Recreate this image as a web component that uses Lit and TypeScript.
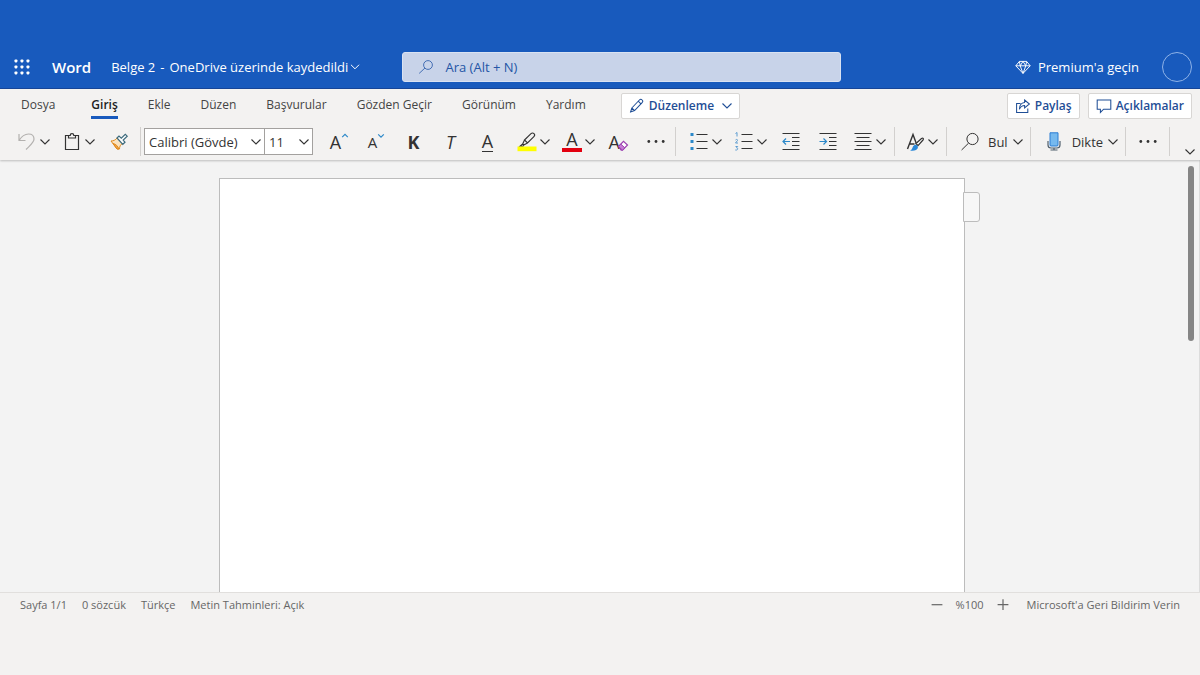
import { LitElement, html, css, svg } from "lit";
import { customElement, property, state } from "lit/decorators.js";

const glyphs: Record<string, unknown> = {
  waffle: svg`<g fill="#fff" stroke="none">${[2.5, 8.5, 14.5].map((y) =>
    [2.5, 8.5, 14.5].map((x) => svg`<rect x=${x} y=${y} width="2.900" height="2.900" rx=".8"/>`))}</g>`,
  chevron: svg`<path d="M5.500 7.500 10 12 14.500 7.500" stroke-width="1.100"/>`,
  search: svg`<circle cx="12.500" cy="7.500" r="5.500"/><path d="M8.700 11.300 1.500 18"/>`,
  find: svg`<circle cx="12.500" cy="7" r="5.600"/><path d="M8.600 11.100 1.600 18"/>`,
  gem: svg`<path d="M5.500 3h9l4.500 5.500-9 9.500L1 8.500ZM1 8.500h18M5.500 3l1 5.500L10 18l3.500-9.500 1-5.500M6.500 8.500 10 3l3.500 5.500" stroke-width="1.200"/>`,
  undo: svg`<path d="M2 2v6.500h6.500M2 8.500C4.500 4.500 8 2 11.500 2c3.500 0 5.500 2.200 5.500 5 0 3.500-3 5.500-8 10.500" stroke="#b3b1af" stroke-width="1.200"/>`,
  paste: svg`<path d="M6.500 3.500H3.500v14h13v-14h-3" stroke-width="1.200"/><path d="M6.500 6V3.500h1.700a1.800 1.800 0 0 1 3.600 0h1.700V6Z" stroke-width="1.200"/>`,
  painter: svg`<path d="M2 9c2.500 0 4.500-1 6-3l5.500 5.500c-2 1-3 3-3 5.500L8 17 2 9Z" fill="#fbe3bf" stroke="#e08a1e"/><path d="M4 11.500c3 .5 5 3 6 5.500L8 17Z" fill="#f0a445" stroke="#e08a1e"/><path d="m8 6 2-2 2.300 2.200 4-3.900 1.900 1.900-4 3.900L16 10.300l-2.200 2Z" fill="#fff" stroke="#3d6b7d" stroke-width="1.200"/>`,
  highlight: svg`<path d="m7.500 8 6.500-6.300c1-1 2.200-.8 3 0s.9 2-.1 3L10.500 11ZM7.500 8 5.700 12l1 1 3.800-2M5.700 12 3 14.300h3l.7-1.300" stroke-width="1.100"/><path d="M.5 14.500h19v4.700h-19z" fill="#ffff00" stroke="none"/>`,
  eraser: svg`<path d="m9.500 14.500 5-5.200 4 3.700-5 5.200h-1.300Z" fill="#fff" stroke="#9b3fb0" stroke-width="1.200"/><path d="m9.500 14.500 2.300-2.400 4 3.700-2.300 2.400Z" fill="#c77dd6" stroke="#9b3fb0"/>`,
  more: svg`<g fill="#333" stroke="none"><circle cx="2.800" cy="9.500" r="1.400"/><circle cx="10" cy="9.500" r="1.400"/><circle cx="17.200" cy="9.500" r="1.400"/></g>`,
  bullets: svg`<path d="M7.500 2.500h11M7.500 9.500h11M7.500 16.500h11" stroke-width="1.200"/><path d="M1.500 1h3v3h-3zM1.500 8h3v3h-3zM1.500 15h3v3h-3z" fill="#2b88c9" stroke="none"/>`,
  numbers: svg`<path d="M7.500 2.500h11M7.500 9.500h11M7.500 16.500h11" stroke-width="1.200"/><path d="M1.500 1.500 3 .5v4M1.500 8c1-1 2.300-.6 2 .5L1.500 11h2.500M1.500 14.500h2.200l-1.200 1.300c1.800 0 1.800 2.700-1.200 2.200" stroke="#5a9bd0"/>`,
  outdent: svg`<path d="M1.500 1.500h17M11 5.500h7.500M11 9.500h7.500M11 13.500h7.500M1.500 17.500h17" stroke-width="1.200"/><path d="M9 9.500H2m3-3-3 3 3 3" stroke="#2b88c9" stroke-width="1.200"/>`,
  indent: svg`<path d="M1.500 1.500h17M11 5.500h7.500M11 9.500h7.500M11 13.500h7.500M1.500 17.500h17" stroke-width="1.200"/><path d="M1.500 9.500h7m-3-3 3 3-3 3" stroke="#2b88c9" stroke-width="1.200"/>`,
  align: svg`<path d="M1.500 1.500h17M3.500 5.500h13M1.500 9.500h17M3.500 13.500h13M1.500 17.500h17" stroke-width="1.200"/>`,
  styles: svg`<path d="M2.500 17 8 2.500l3.500 9.500M4.500 12h5" stroke-width="1.400"/><path d="m11 11.500 5.500-5c1.500-1 2.500.3 1.500 1.500L13 13.700Z" fill="#fff" stroke-width="1.200"/><path d="M5 18.500c2-.5 2-2 3-4 1.200-2.200 3.200-2.200 4.300-1 1.200 1.500.7 3.500-1.300 4.500-1.500.8-4 1-6 .5Z" fill="#2b88d8" stroke="none"/>`,
  mic: svg`<path d="M4 9v4c0 2 1 3 3 3h6c2 0 3-1 3-3V9M10 16v2M6.500 18h7" stroke="#51606e" stroke-width="1.200"/><path d="M6 .8h8V13c0 .7-.3 1-1 1H7c-.7 0-1-.3-1-1Z" fill="#76b9ee" stroke="#2b7cd3"/>`,
  pencil: svg`<path d="m3.500 12.500 9.500-10c1-1 2.400-1 3.400 0s1 2.300 0 3.300L7 15.700l-5 1.800Zm0 0L7 15.700M11.500 4l3.400 3.300" stroke-width="1.300"/>`,
  share: svg`<path d="M7 7H2v11h14v-5" stroke-width="1.300"/><path d="M12 2.500 18 7.500 12 12.500v-3C9 9.500 7 11 5.500 14 5.500 9 8 6 12 5.500Z" stroke-width="1.300"/>`,
  comment: svg`<path d="M1.500 2.500h17v11.500h-9L5.500 18v-4h-4Z" stroke-width="1.300"/>`,
  minus: svg`<path d="M1 9.500h18" stroke-width="2"/>`,
  plus: svg`<path d="M1 9.500h18M10 .5v18" stroke-width="2"/>`,
  caretUp: svg`<path d="M3 13 10 6l7 7" stroke="#2b88c9" stroke-width="3"/>`,
  caretDown: svg`<path d="M3 6l7 7 7-7" stroke="#2b88c9" stroke-width="3"/>`,
};

const icon = (name: string, cls = "i20") => html`
  <svg class=${cls} viewBox="0 0 20 20" fill="none" stroke="currentColor" stroke-width="1" aria-hidden="true">${glyphs[name]}</svg>`;

const shared = css`
  * { box-sizing: border-box; }
  button, input, select { font: inherit; color: inherit; margin: 0; }
  button { border: 0; background: none; padding: 0; cursor: pointer; white-space: nowrap; }
  svg { display: block; flex: none; }
  .i8 { width: 8px; height: 8px; }
  .i12 { width: 12px; height: 12px; }
  .i16 { width: 16px; height: 16px; }
  .i20 { width: 20px; height: 20px; }
  .chev { width: 20px; height: 20px; margin: 0 -5px; }
`;

@customElement("title-bar")
class TitleBar extends LitElement {
  static styles = [shared, css`
    :host { display: block; background: #185abd; color: #fff; border-bottom: 1px solid #17479a; padding-top: 45px; }
    .bar { display: grid; grid-template-columns: 110fr 120fr 98fr; align-items: center; height: 43px; }
    .side { display: flex; align-items: center; }
    .start { padding-left: 12px; }
    .brand { font-size: 15px; font-weight: 600; margin-left: 20px; }
    .doc { display: flex; align-items: center; gap: 5px; margin-left: 20px; }
    .small { width: 18px; height: 18px; margin-left: -7px; }
    .search { display: flex; align-items: center; gap: 11px; height: 30px; padding-left: 15px;
      background: #c8d3e9; color: #2456a6; border-radius: 3px; border: 1px solid #d9e2f2; }
    .search input { flex: 1; min-width: 0; border: 0; outline: 0; background: none; padding: 0; }
    .search input::placeholder { color: inherit; opacity: 1; }
    .end { justify-content: flex-end; gap: 23px; padding-right: 8px; }
    .premium { display: flex; align-items: center; gap: 7px; }
    .avatar { width: 30px; height: 30px; border: 1px solid #8fb3e8; border-radius: 50%; }
  `];
  render() {
    return html`<header class="bar">
      <div class="side start">
        <button aria-label="Uygulama başlatıcısı">${icon("waffle")}</button>
        <span class="brand">Word</span>
        <button class="doc"><span>Belge 2</span><span>-</span><span>OneDrive üzerinde kaydedildi</span>${icon("chevron", "small")}</button>
      </div>
      <label class="search">${icon("search", "i16")}<input type="text" placeholder="Ara (Alt + N)" aria-label="Ara" /></label>
      <div class="side end">
        <button class="premium">${icon("gem", "i16")}Premium'a geçin</button>
        <button class="avatar" aria-label="Hesap"></button>
      </div>
    </header>`;
  }
}

@customElement("tab-strip")
class TabStrip extends LitElement {
  @state() private active = "Giriş";
  static styles = [shared, css`
    :host { display: flex; align-items: flex-start; padding: 4px 8px 0 6px; color: #444; font-size: 12px; }
    .tabs { display: flex; }
    .tab { padding: 0 15px; height: 26px; line-height: 22px; }
    .tab.file { margin-right: 6px; }
    .mark { display: block; height: 25px; border-bottom: 3px solid transparent; }
    .tab.on { color: #222; font-weight: 600; }
    .tab.on .mark { border-color: #185abd; }
    .pill { display: flex; align-items: center; gap: 4px; height: 26px; padding: 0 7px; background: #fff;
      border: 1px solid #d8d6d4; border-radius: 2px; color: #1f4e96; font-weight: 600; }
    .mode { margin-left: 20px; }
    .mode .chev { margin: 0 -5px 0 -1px; }
    .right { display: flex; gap: 8px; margin-left: auto; }
  `];
  render() {
    const tabs = ["Dosya", "Giriş", "Ekle", "Düzen", "Başvurular", "Gözden Geçir", "Görünüm", "Yardım"];
    return html`
      <nav class="tabs">${tabs.map((t, i) => html`
        <button class="tab ${i === 0 ? "file" : ""} ${t === this.active ? "on" : ""}"
          @click=${() => (this.active = t)}><span class="mark">${t}</span></button>`)}</nav>
      <button class="pill mode">${icon("pencil", "i16")}Düzenleme${icon("chevron", "chev")}</button>
      <div class="right">
        <button class="pill">${icon("share", "i16")}Paylaş</button>
        <button class="pill">${icon("comment", "i16")}Açıklamalar</button>
      </div>`;
  }
}

@customElement("tool-bar")
class ToolBar extends LitElement {
  static styles = [shared, css`
    :host { display: flex; align-items: center; height: 37px; padding-left: 10px; color: #333; }
    .group { display: flex; align-items: center; }
    .btn { display: flex; align-items: center; justify-content: center; width: 37px; height: 28px; }
    .split { display: flex; align-items: center; gap: 3px; height: 28px; padding: 0 5px 0 7px; }
    .named { display: flex; align-items: center; gap: 8px; height: 28px; padding: 0 4px 0 10px; }
    .named .chev { margin-left: -8px; }
    .sep { width: 1px; height: 29px; background: #d2d0ce; margin: 0 3px; }
    .sep.wide { margin: 0 6px 0 1px; }
    .field { display: grid; align-items: center; height: 27px; border: 1px solid #a3a19f; background: #fff; }
    .field select, .field svg { grid-area: 1 / 1; }
    .field svg { justify-self: end; margin: 0 -2px 0 0; pointer-events: none; }
    .field select { appearance: none; border: 0; outline: 0; background: none; padding: 0 20px 0 4px; width: 100%; height: 25px; }
    .font { width: 121px; }
    .size { width: 49px; margin-left: -1px; }
    .letters { margin: 0 4px 0 8px; }
    .letter { font-size: 18px; line-height: 20px; }
    .lesser { font-size: 15px; line-height: 20px; }
    .caret { align-self: flex-start; margin-top: 4px; }
    .bold { font-weight: 700; }
    .italic { font-style: italic; }
    .under { border-bottom: 1px solid #333; }
    .color { width: 20px; height: 20px; line-height: 15px; border-bottom: 4px solid #e3000f; text-align: center; font-size: 18px; }
    .clear { display: grid; width: 20px; }
    .clear > * { grid-area: 1 / 1; }
    .clear .letter { text-align: left; }
    .collapse { align-self: flex-end; margin-left: auto; padding-right: 5px; }
    .collapse .chev { margin: 0 -5px -2px 0; }
  `];
  private split(name: string, label: string) {
    return html`<button class="split" aria-label=${label}>${icon(name)}${icon("chevron", "chev")}</button>`;
  }
  private single(name: string, label: string) {
    return html`<button class="btn" aria-label=${label}>${icon(name)}</button>`;
  }
  private named(name: string, label: string) {
    return html`<button class="named">${icon(name)}${label}${icon("chevron", "chev")}</button>`;
  }
  render() {
    return html`
      <div class="group">
        ${this.split("undo", "Geri al")}${this.split("paste", "Yapıştır")}${this.single("painter", "Biçim boyacısı")}
      </div>
      <i class="sep"></i>
      <div class="group">
        <div class="field font"><select aria-label="Yazı tipi"><option>Calibri (Gövde)</option></select>${icon("chevron")}</div>
        <div class="field size"><select aria-label="Yazı boyutu"><option>11</option></select>${icon("chevron")}</div>
      </div>
      <div class="group letters">
        <button class="btn"><span class="letter">A</span>${icon("caretUp", "i8 caret")}</button>
        <button class="btn"><span class="lesser">A</span>${icon("caretDown", "i8 caret")}</button>
        <button class="btn"><span class="letter bold">K</span></button>
        <button class="btn"><span class="letter italic">T</span></button>
        <button class="btn"><span class="letter under">A</span></button>
      </div>
      <div class="group">
        ${this.split("highlight", "Vurgu rengi")}
        <button class="split"><span class="color">A</span>${icon("chevron", "chev")}</button>
        <button class="btn"><span class="clear"><span class="letter">A</span>${icon("eraser")}</span></button>
        ${this.single("more", "Diğer yazı tipi seçenekleri")}
      </div>
      <i class="sep wide"></i>
      <div class="group">
        ${this.split("bullets", "Madde işaretleri")}${this.split("numbers", "Numaralandırma")}
        ${this.single("outdent", "Girintiyi azalt")}${this.single("indent", "Girintiyi artır")}${this.split("align", "Hizalama")}
      </div>
      <i class="sep"></i>
      <div class="group">${this.split("styles", "Stiller")}</div>
      <i class="sep"></i>
      <div class="group">${this.named("find", "Bul")}</div>
      <i class="sep"></i>
      <div class="group">${this.named("mic", "Dikte")}</div>
      <i class="sep"></i>
      <div class="group">${this.single("more", "Diğer seçenekler")}</div>
      <i class="sep"></i>
      <button class="collapse" aria-label="Şeridi daralt">${icon("chevron", "chev")}</button>`;
  }
}

@customElement("doc-canvas")
class DocCanvas extends LitElement {
  static styles = [shared, css`
    :host { display: flex; background: #f3f3f3; border-right: 1px solid #dcdcdc; overflow: hidden; }
    .desk { flex: 1; display: grid; grid-template-columns: 1fr minmax(0, 746px) 1fr; padding-top: 18px; }
    .page { grid-column: 2; background: #fff; border: 1px solid #bcbcbc; border-bottom: 0; }
    .flag { width: 17px; height: 30px; margin: 14px 0 0 -2px; background: #f7f7f7; border: 1px solid #bcbcbc; border-radius: 0 3px 3px 0; }
    .track { width: 15px; padding: 6px 5px 0 4px; }
    .thumb { height: 41%; border-radius: 3px; background: #858585; }
  `];
  render() {
    return html`<main class="desk"><div class="page"></div><button class="flag" aria-label="Açıklama ekle"></button></main>
      <div class="track"><div class="thumb"></div></div>`;
  }
}

@customElement("status-bar")
class StatusBar extends LitElement {
  @property({ type: Number }) zoom = 100;
  static styles = [shared, css`
    :host { display: flex; justify-content: space-between; align-items: flex-start; padding: 4px 20px 0;
      border-top: 1px solid #e1dfdd; background: #f3f2f1; color: #666; font-size: 11px; line-height: 16px; }
    .part { display: flex; align-items: center; gap: 15px; }
    .zoom { display: flex; align-items: center; gap: 13px; margin-right: 3px; }
  `];
  render() {
    return html`
      <div class="part"><span>Sayfa 1/1</span><span>0 sözcük</span><span>Türkçe</span><span>Metin Tahminleri: Açık</span></div>
      <div class="part">
        <div class="zoom">
          <button aria-label="Uzaklaştır">${icon("minus", "i12")}</button><span>%${this.zoom}</span>
          <button aria-label="Yakınlaştır">${icon("plus", "i12")}</button>
        </div>
        <span>Microsoft'a Geri Bildirim Verin</span>
      </div>`;
  }
}

@customElement("app-root")
class AppRoot extends LitElement {
  static styles = css`
    :host { display: flex; flex-direction: column; height: 100vh; overflow: hidden; background: #f3f2f1;
      font-family: "Open Sans", "Noto Sans", sans-serif; font-size: 13px; line-height: 20px; }
    .ribbon { position: relative; background: #f3f2f1; box-shadow: 0 1px 2px rgba(0, 0, 0, .22); }
    .strip { height: 30px; }
    .canvas { flex: 1; }
    .status { height: 78px; }
  `;
  render() {
    return html`
      <title-bar></title-bar>
      <div class="ribbon"><tab-strip class="strip"></tab-strip><tool-bar></tool-bar></div>
      <doc-canvas class="canvas"></doc-canvas>
      <status-bar class="status"></status-bar>`;
  }
}
